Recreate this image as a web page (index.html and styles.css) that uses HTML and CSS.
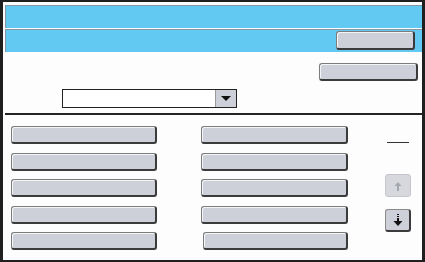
FILE: index.html
```html
<!DOCTYPE html>
<html lang="en">

<head>
    <meta charset="utf-8">
    <title>Panel</title>
    <link rel="stylesheet" href="styles.css">
</head>

<body>
    <div class="screen">
        <div class="band"></div>
        <div class="band band-tools">
            <button class="knap knap-top"></button>
        </div>

        <div class="rad-hojre">
            <button class="knap knap-stor"></button>
        </div>

        <div class="vaelg">
            <span class="vaelg-felt"></span>
            <span class="vaelg-pil">
                <svg width="10" height="6" viewBox="0 0 10 6"><polygon points="0,0 10,0 5,5" fill="#111"/></svg>
            </span>
        </div>

        <hr class="streg">

        <section class="liste">
            <div class="gitter">
                <button class="knap"></button>
                <button class="knap"></button>
                <button class="knap"></button>
                <button class="knap"></button>
                <button class="knap"></button>
                <button class="knap"></button>
                <button class="knap"></button>
                <button class="knap"></button>
                <button class="knap"></button>
                <button class="knap skaev"></button>
            </div>
            <div class="side">
                <span class="side-streg"></span>
                <button class="pil pil-slukket">
                    <svg width="24" height="21" viewBox="0 0 24 21">
                        <polygon points="8.5,11 15.5,11 12,7" fill="#a4a8ae"/>
                        <rect x="11" y="11" width="2" height="5" fill="#a4a8ae"/>
                    </svg>
                </button>
                <button class="pil">
                    <svg width="22" height="20" viewBox="0 0 22 20">
                        <rect x="10" y="4" width="2" height="1" fill="#111"/>
                        <rect x="10" y="6" width="2" height="1" fill="#111"/>
                        <rect x="10" y="8" width="2" height="3" fill="#111"/>
                        <polygon points="6.5,11 15.5,11 11,16" fill="#111"/>
                    </svg>
                </button>
            </div>
        </section>
    </div>
</body>

</html>
```

FILE: styles.css
```css
html,
body {
    margin: 0;
    padding: 0;
}

.screen {
    width: 425px;
    height: 262px;
    box-sizing: border-box;
    border-style: solid;
    border-color: #1f1f1f;
    border-width: 2px 3px 2px 3px;
    background-color: #fdfdfd;
    overflow: hidden;
}

.band {
    height: 22px;
    margin: 3px 0 0 2px;
    background-color: #62c9f2;
    border-top: 1px solid #8796a4;
    border-left: 1px solid #8796a4;
}

.band-tools {
    margin-top: 1px;
    display: flex;
    justify-content: flex-end;
    align-items: flex-start;
    padding-top: 1px;
    padding-right: 7px;
    height: 21px;
}

.knap {
    display: block;
    box-sizing: border-box;
    padding: 0;
    height: 18px;
    background-color: #cdd0d8;
    border: 1px solid #7c7c7c;
    border-right: 2px solid #3b3b3b;
    border-bottom: 2px solid #3b3b3b;
    border-radius: 3px;
    box-shadow: inset 1px 1px 0 #f4f5f7;
}

.knap-top {
    width: 79px;
    height: 19px;
}

.rad-hojre {
    display: flex;
    justify-content: flex-end;
    margin-top: 11px;
    padding-right: 4px;
}

.knap-stor {
    width: 99px;
}

.vaelg {
    display: flex;
    box-sizing: border-box;
    width: 175px;
    height: 19px;
    margin: 8px 0 0 59px;
    border: 1px solid #222;
    background-color: #fff;
}

.vaelg-felt {
    flex: 1;
}

.vaelg-pil {
    width: 20px;
    display: flex;
    align-items: center;
    justify-content: center;
    background-color: #cdd0d8;
    border-left: 1px solid #9a9a9a;
}

.streg {
    margin: 5px 0 0 2px;
    height: 2px;
    border: 0;
    background-color: #242424;
}

.liste {
    display: flex;
    margin-top: 11px;
}

.gitter {
    display: grid;
    grid-template-columns: 146px 147px;
    grid-auto-rows: 18px;
    column-gap: 44px;
    row-gap: 8.5px;
    margin-left: 8px;
}

.skaev {
    margin-left: 2px;
    width: 145px;
}

.side {
    display: flex;
    flex-direction: column;
    margin-left: 37px;
}

.side-streg {
    display: block;
    width: 22px;
    height: 1px;
    margin: 16px 0 0 2px;
    background-color: #333;
}

.pil {
    box-sizing: border-box;
    width: 26px;
    height: 23px;
    padding: 0;
    margin-top: 31px;
    display: flex;
    align-items: center;
    justify-content: center;
    background-color: #cdd0d8;
    border: 1px solid #8a8a8a;
    border-right: 2px solid #3b3b3b;
    border-bottom: 2px solid #3b3b3b;
    border-radius: 3px;
}

.pil + .pil {
    margin-top: 12px;
}

.pil-slukket {
    background-color: #d6d8dd;
    border: 1px solid #c4c6cb;
}
```
